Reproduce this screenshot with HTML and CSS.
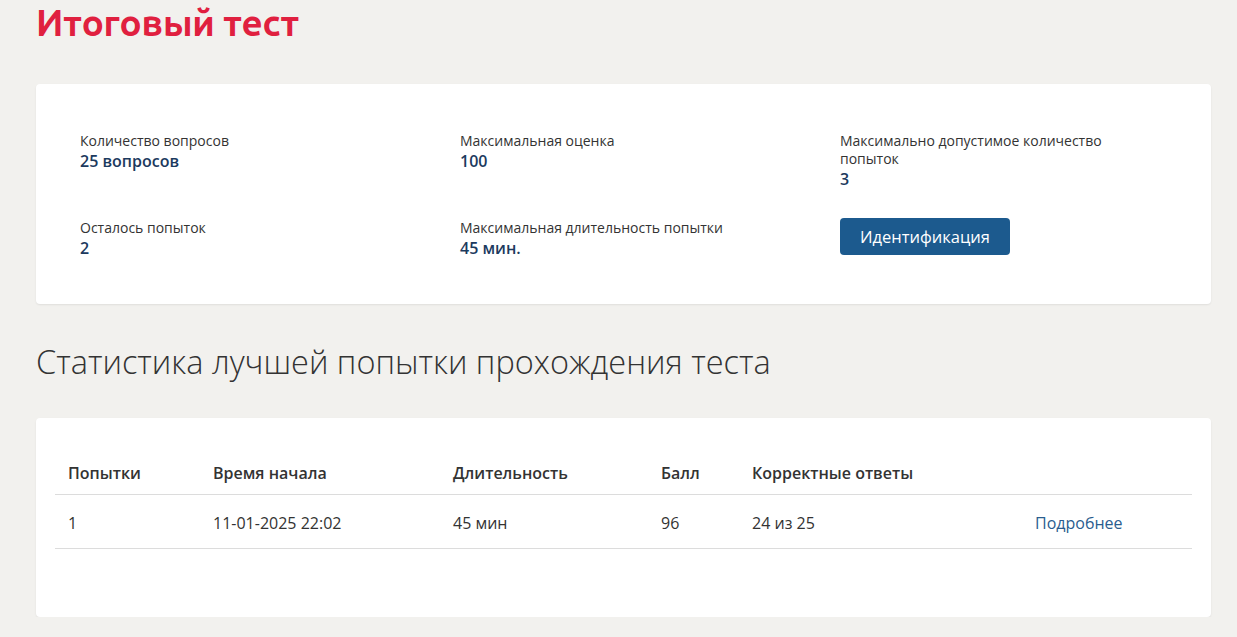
FILE: index.html
```html
<!DOCTYPE html>
<html lang="ru">
<head>
<meta charset="utf-8">
<link rel="stylesheet" href="styles.css">
</head>
<body>
<main class="page">
  <h1 class="title">Итоговый тест</h1>
  <section class="card info">
    <div class="info-grid">
      <div class="item">
        <div class="label">Количество вопросов</div>
        <div class="value">25 вопросов</div>
      </div>
      <div class="item">
        <div class="label">Максимальная оценка</div>
        <div class="value">100</div>
      </div>
      <div class="item">
        <div class="label">Максимально допустимое количество попыток</div>
        <div class="value">3</div>
      </div>
      <div class="item">
        <div class="label">Осталось попыток</div>
        <div class="value">2</div>
      </div>
      <div class="item">
        <div class="label">Максимальная длительность попытки</div>
        <div class="value">45 мин.</div>
      </div>
      <div class="item">
        <button class="btn">Идентификация</button>
      </div>
    </div>
  </section>
  <h2 class="subtitle">Статистика лучшей попытки прохождения теста</h2>
  <section class="card stats">
    <table class="table">
      <colgroup>
        <col class="c1"><col class="c2"><col class="c3"><col class="c4"><col class="c5"><col class="c6">
      </colgroup>
      <thead>
        <tr><th>Попытки</th><th>Время начала</th><th>Длительность</th><th>Балл</th><th>Корректные ответы</th><th></th></tr>
      </thead>
      <tbody>
        <tr><td>1</td><td>11-01-2025 22:02</td><td>45 мин</td><td>96</td><td>24 из 25</td><td><a class="link" href="#">Подробнее</a></td></tr>
      </tbody>
    </table>
  </section>
</main>
</body>
</html>
```

FILE: styles.css
```css
* { box-sizing: border-box; }
html, body { margin: 0; padding: 0; }
body {
  background: #f2f1ee;
  font-family: "Open Sans", "Noto Sans", sans-serif;
  color: #333;
}
.page {
  padding: 0 26px 0 36px;
}
.title {
  margin: 0;
  padding-top: 0;
  font-family: "Ubuntu", "Noto Sans", "Open Sans", sans-serif;
  font-weight: 700;
  font-size: 36.8px;
  line-height: 46px;
  color: #e0203f;
  letter-spacing: -0.2px;
}
.card {
  background: #fff;
  border-radius: 4px;
  box-shadow: 0 1px 2px rgba(0,0,0,0.08);
}
.info {
  margin-top: 38px;
  padding: 48px 20px 45px 44px;
}
.info-grid {
  display: grid;
  grid-template-columns: 380px 380px 1fr;
  row-gap: 29px;
}
.item {
  padding-right: 60px;
}
.label {
  font-size: 14px;
  line-height: 18px;
  color: #333;
}
.value {
  font-size: 16px;
  font-weight: 600;
  line-height: 22px;
  color: #1c3a5e;
}
.btn {
  margin-top: -1px;
  height: 37px;
  padding: 0 20px;
  background: #1c5a8e;
  color: #fff;
  border: 0;
  border-radius: 4px;
  font-family: inherit;
  font-size: 16.5px;
}
.subtitle {
  margin: 0;
  padding-top: 37px;
  font-family: "Open Sans", sans-serif;
  font-weight: 300;
  font-size: 32.5px;
  line-height: 42px;
  color: #333;
}
.stats {
  margin-top: 35px;
  padding: 38px 19px 68px 19px;
  height: 199px;
}
.table {
  width: 100%;
  border-collapse: collapse;
  font-size: 16px;
}
.c1 { width: 145px; }
.c2 { width: 240px; }
.c3 { width: 208px; }
.c4 { width: 91px; }
.c5 { width: 283px; }
.table th {
  text-align: left;
  font-weight: 600;
  padding: 5px 13px 9px;
  border-bottom: 1px solid #dcdcdc;
  height: 38px;
  color: #333;
}
.table td {
  padding: 16px 13px 12px;
  border-bottom: 1px solid #dcdcdc;
  height: 54px;
  color: #333;
}
.link {
  color: #2a5d8f;
  text-decoration: none;
}
```
